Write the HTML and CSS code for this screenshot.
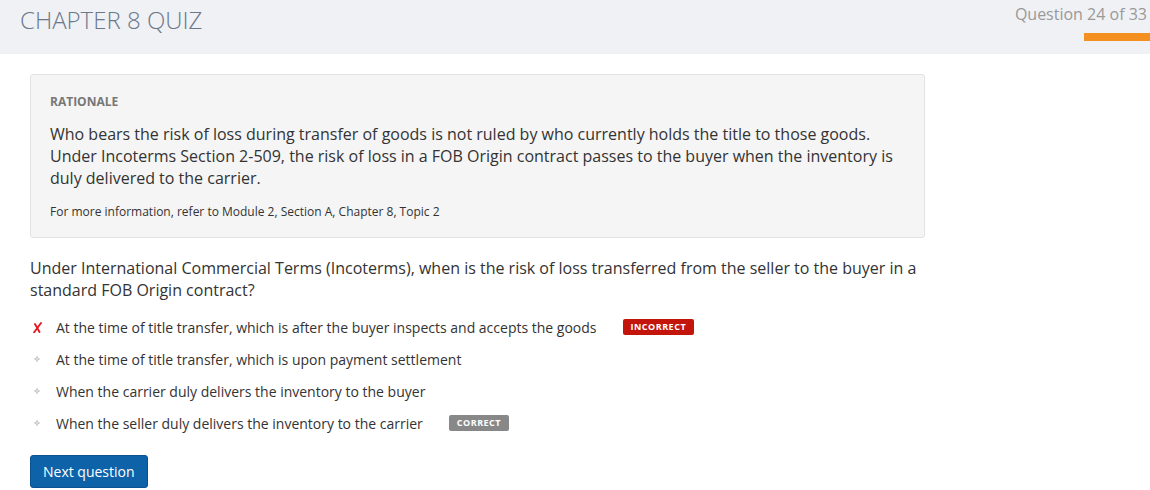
FILE: index.html
```html
<!DOCTYPE html>
<html>
<head>
<meta charset="utf-8">
<link rel="stylesheet" href="styles.css">
</head>
<body>
<header class="top">
  <h1 class="title">CHAPTER 8 QUIZ</h1>
  <div class="progress">
    <div class="count">Question 24 of 33</div>
    <div class="bar"></div>
  </div>
</header>
<main class="content">
  <section class="rationale">
    <div class="label">RATIONALE</div>
    <p class="explain">Who bears the risk of loss during transfer of goods is not ruled by who currently holds the title to those goods. Under Incoterms Section 2-509, the risk of loss in a FOB Origin contract passes to the buyer when the inventory is duly delivered to the carrier.</p>
    <p class="ref">For more information, refer to Module 2, Section A, Chapter 8, Topic 2</p>
  </section>
  <p class="question">Under International Commercial Terms (Incoterms), when is the risk of loss transferred from the seller to the buyer in a standard FOB Origin contract?</p>
  <ul class="answers">
    <li class="answer">
      <span class="mark"><svg width="9" height="11" viewBox="0 0 9 11"><path d="M2 2 L6.5 10 M8 1 L1 10.5" stroke="#e8141c" stroke-width="1.8" stroke-linecap="round" fill="none"/></svg></span>
      <span class="text">At the time of title transfer, which is after the buyer inspects and accepts the goods</span>
      <span class="badge bad">INCORRECT</span>
    </li>
    <li class="answer">
      <span class="mark"><svg width="8" height="8" viewBox="0 0 8 8"><path d="M4 0.5 L5 3 L7.5 4 L5 5 L4 7.5 L3 5 L0.5 4 L3 3 Z" fill="#bbb"/><circle cx="4" cy="4" r="0.9" fill="#eee"/></svg></span>
      <span class="text">At the time of title transfer, which is upon payment settlement</span>
    </li>
    <li class="answer">
      <span class="mark"><svg width="8" height="8" viewBox="0 0 8 8"><path d="M4 0.5 L5 3 L7.5 4 L5 5 L4 7.5 L3 5 L0.5 4 L3 3 Z" fill="#bbb"/><circle cx="4" cy="4" r="0.9" fill="#eee"/></svg></span>
      <span class="text">When the carrier duly delivers the inventory to the buyer</span>
    </li>
    <li class="answer">
      <span class="mark"><svg width="8" height="8" viewBox="0 0 8 8"><path d="M4 0.5 L5 3 L7.5 4 L5 5 L4 7.5 L3 5 L0.5 4 L3 3 Z" fill="#bbb"/><circle cx="4" cy="4" r="0.9" fill="#eee"/></svg></span>
      <span class="text">When the seller duly delivers the inventory to the carrier</span>
      <span class="badge good">CORRECT</span>
    </li>
  </ul>
  <button class="next">Next question</button>
</main>
</body>
</html>
```

FILE: styles.css
```css
* { box-sizing: border-box; }
body {
  margin: 0;
  font-family: "Open Sans", "Liberation Sans", sans-serif;
  color: #333;
  background: #fff;
}
.top {
  height: 54px;
  background: #f0f1f5;
  display: flex;
  justify-content: space-between;
  align-items: flex-start;
}
.title {
  margin: 5px 0 0 20px;
  font-size: 24px;
  font-weight: 300;
  color: #6b7889;
  line-height: 30px;
}
.progress {
  display: flex;
  flex-direction: column;
  align-items: flex-end;
  padding-top: 3px;
}
.count {
  font-size: 16px;
  color: #999;
  line-height: 22px;
  padding-right: 3px;
}
.bar {
  margin-top: 8px;
  width: 66px;
  height: 8px;
  background: #f3901f;
}
.content {
  margin-left: 30px;
  width: 895px;
  padding-top: 20px;
}
.rationale {
  background: #f5f5f5;
  border: 1px solid #e3e3e3;
  border-radius: 3px;
  padding: 19px 19px 17px;
}
.label {
  font-size: 12px;
  font-weight: 700;
  color: #777;
  line-height: 16px;
}
.explain {
  margin: 13px 0 0;
  font-size: 16px;
  line-height: 22px;
  color: #333;
}
.ref {
  margin: 14px 0 0;
  font-size: 12px;
  line-height: 17px;
  color: #333;
}
.question {
  margin: 19px 0 0;
  font-size: 16px;
  line-height: 22px;
  color: #333;
}
.answers {
  list-style: none;
  margin: 15px 0 0;
  padding: 0;
  display: flex;
  flex-direction: column;
  gap: 10px;
}
.answer {
  display: flex;
  align-items: center;
  height: 22px;
  font-size: 14px;
}
.mark {
  width: 26px;
  display: flex;
  justify-content: flex-start;
  padding-left: 3px;
}
.text {
  color: #333;
}
.badge {
  margin-left: 26px;
  font-size: 9px;
  font-weight: 700;
  letter-spacing: 0.5px;
  color: #fff;
  height: 16px;
  line-height: 16px;
  padding: 0 8px;
  border-radius: 2px;
}
.bad { background: #c4150c; }
.good { background: #888; }
.next {
  margin-top: 21px;
  height: 33px;
  padding: 0 12px;
  font-family: "Open Sans", "Liberation Sans", sans-serif;
  font-size: 14px;
  color: #fff;
  background: #0d62a8;
  border: 1px solid #0a5290;
  border-radius: 3px;
}
```
